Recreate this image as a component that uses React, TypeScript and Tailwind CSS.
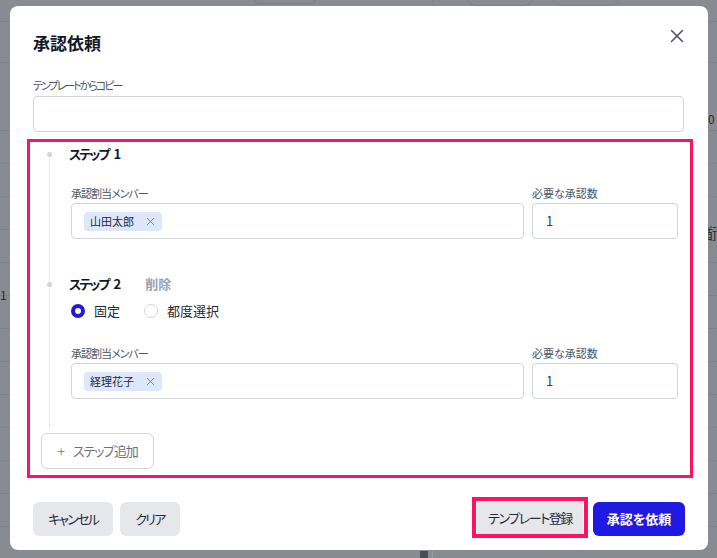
import React, { useState } from 'react';
import { X } from 'lucide-react';

const bgLeftLines = [21, 62, 130, 163, 196, 229, 262, 295, 328, 361, 394, 427, 460, 493, 526];

const Chip = ({ name }: { name: string }) => (
  <span className="inline-flex items-center h-[19px] pl-[6px] pr-[5px] rounded bg-[#dde7fb] text-[11px] leading-none text-gray-800">
    {name}
    <X className="ml-[10px] text-gray-500" size={13} strokeWidth={1.5} />
  </span>
);

const StepTitle = ({ n }: { n: number }) => (
  <span className="text-gray-900">
    <span className="tracking-[-0.15em]">ステップ</span>
    <span className="ml-[5px]">{n}</span>
  </span>
);

const MemberFields = ({ member }: { member: string }) => (
  <div className="flex gap-[8px] ml-[2px]">
    <div className="flex-1">
      <div className="text-[11px] leading-[16px] text-gray-600 tracking-[-0.09em]">承認割当メンバー</div>
      <div className="mt-[2px] h-[36px] border border-gray-300 rounded flex items-center pl-[12px]">
        <Chip name={member} />
      </div>
    </div>
    <div className="w-[146px]">
      <div className="text-[11px] leading-[16px] text-gray-600">必要な承認数</div>
      <div className="mt-[2px] h-[36px] border border-gray-300 rounded flex items-center pl-[13px] text-[13px] text-gray-700">
        1
      </div>
    </div>
  </div>
);

const Rail = ({ first }: { first?: boolean }) => (
  <div className="w-[39px] flex flex-col items-center shrink-0">
    <div className={first ? 'h-[8px]' : 'h-[8px] w-px bg-gray-200'} />
    <div className="w-[5px] h-[5px] rounded-full bg-gray-300" />
    <div className="flex-1 w-px bg-gray-200" />
  </div>
);

export default function App() {
  const [mode, setMode] = useState<'fixed' | 'each'>('fixed');

  return (
    <div className="relative w-[717px] h-[558px] overflow-hidden bg-[#898b93] font-['Noto_Sans_CJK_JP',sans-serif] [font-feature-settings:'palt']">
      {/* dimmed page behind */}
      <div className="absolute inset-0">
        {bgLeftLines.map((y) => (
          <div key={y} className="absolute left-0 right-0 h-px bg-[#7f818a]" style={{ top: y }} />
        ))}
        <div className="absolute top-[-6px] left-[254px] w-[62px] h-[10px] rounded-md border border-[#7a7c84]" />
        <div className="absolute top-[-20px] left-[464px] w-[72px] h-[26px] rounded-full border border-[#7f818a]" />
        <div className="absolute top-[-20px] left-[550px] w-[72px] h-[26px] rounded-full border border-[#7f818a]" />
        <div className="absolute top-0 left-[432px] w-px h-[6px] bg-[#7f818a]" />
        <div className="absolute top-[286px] left-0 text-[12px] text-[#2b2d33]">1</div>
        <div className="absolute top-[110px] left-[708px] text-[12px] text-[#2b2d33]">0</div>
        <div className="absolute top-[222px] left-[702px] text-[15px] text-[#2b2d33]">衜</div>
        <div className="absolute top-[551px] left-[420px] w-[8px] h-[7px] bg-[#4a4c54]" />
        <div className="absolute top-[551px] left-[432px] w-px h-[7px] bg-[#9a9ca4]" />
      </div>

      {/* modal */}
      <div className="absolute left-[10px] top-[6px] w-[698px] h-[544px] bg-white rounded-lg pt-[23px] pl-[23px] pr-[24px] pb-[14px]">
        <div className="flex items-start justify-between h-[28px]">
          <h2 className="text-[17px] leading-[28px] font-bold text-gray-900">承認依頼</h2>
          <button className="-mt-[4px] -mr-[4px] text-gray-600">
            <X size={22} strokeWidth={1.7} />
          </button>
        </div>

        <div className="mt-[20px] text-[11px] leading-[16px] text-gray-600 tracking-[-0.18em]">テンプレートからコピー</div>
        <div className="mt-[3px] h-[36px] border border-gray-300 rounded" />

        {/* steps (highlighted) */}
        <div className="mt-[7px] -ml-[6px] -mr-[9px] border-[3px] border-[#ff1360] pt-[2px] pb-[6px]">
          <div className="flex">
            <Rail first />
            <div className="flex-1 pr-[12px] pb-[35px]">
              <div className="text-[13px] leading-[20px] font-bold">
                <StepTitle n={1} />
              </div>
              <div className="mt-[21px]">
                <MemberFields member="山田太郎" />
              </div>
            </div>
          </div>

          <div className="flex">
            <Rail />
            <div className="flex-1 pr-[12px] pb-[29px]">
              <div className="flex items-center gap-[24px] text-[13px] leading-[20px] font-bold">
                <StepTitle n={2} />
                <span className="text-gray-400 font-semibold">削除</span>
              </div>
              <div className="mt-[7px] h-[20px] ml-[2px] flex items-center text-[13px] text-gray-800">
                <label className="flex items-center cursor-pointer" onClick={() => setMode('fixed')}>
                  <span
                    className={
                      mode === 'fixed'
                        ? 'w-[14px] h-[14px] rounded-full border-[4px] border-[#2019e1] bg-white'
                        : 'w-[14px] h-[14px] rounded-full border border-gray-300 bg-white'
                    }
                  />
                  <span className="ml-[9px]">固定</span>
                </label>
                <label className="ml-[24px] flex items-center cursor-pointer" onClick={() => setMode('each')}>
                  <span
                    className={
                      mode === 'each'
                        ? 'w-[14px] h-[14px] rounded-full border-[4px] border-[#2019e1] bg-white'
                        : 'w-[14px] h-[14px] rounded-full border border-gray-300 bg-white'
                    }
                  />
                  <span className="ml-[9px]">都度選択</span>
                </label>
              </div>
              <div className="mt-[24px]">
                <MemberFields member="経理花子" />
              </div>
            </div>
          </div>

          <button className="mt-[5px] ml-[11px] w-[113px] h-[36px] border border-gray-300 rounded-md text-[13px] text-gray-500 flex items-center justify-center">
            <span className="mr-[8px] text-[14px] font-light">+</span>
            <span className="tracking-[-0.09em]">ステップ追加</span>
          </button>
        </div>

        {/* footer */}
        <div className="mt-[24px] flex items-start justify-between">
          <div className="flex gap-[7px]">
            <button className="w-[80px] h-[34px] rounded-md bg-gray-200 text-[13px] text-gray-800 tracking-[-0.14em]">キャンセル</button>
            <button className="w-[60px] h-[34px] rounded-md bg-gray-200 text-[13px] text-gray-800 tracking-[-0.13em]">クリア</button>
          </div>
          <div className="flex items-start gap-[5px] -mr-px">
            <div className="-mt-[5px] border-[4px] border-[#ff1360] pt-px px-px">
              <button className="w-[106px] h-[32px] bg-gray-200 text-[13px] text-gray-800 tracking-[-0.11em]">テンプレート登録</button>
            </div>
            <button className="w-[92px] h-[34px] rounded-md bg-[#2019e1] text-[13px] font-semibold text-white">承認を依頼</button>
          </div>
        </div>
      </div>
    </div>
  );
}
